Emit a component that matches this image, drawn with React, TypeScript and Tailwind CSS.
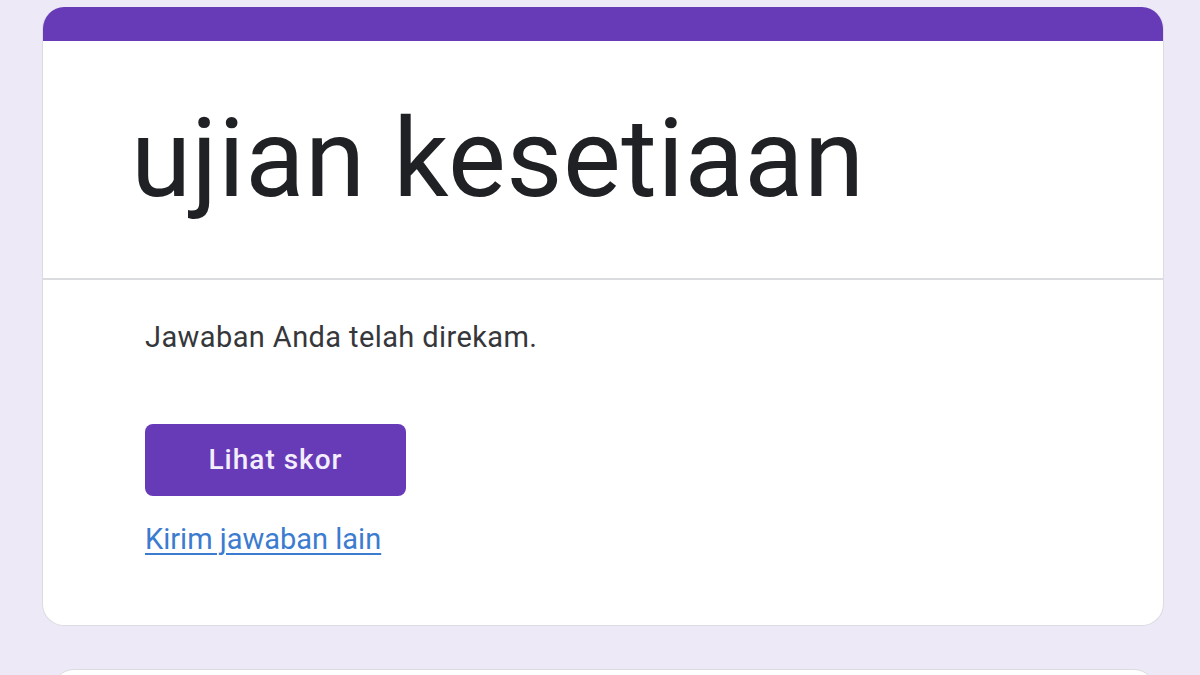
import React from "react";

export default function App() {
  return (
    <div
      className="w-[1200px] h-[675px] overflow-hidden bg-[#ede9f7] pt-[7px]"
      style={{ fontFamily: "Roboto, 'Liberation Sans', sans-serif" }}
    >
      <div className="ml-[42px] w-[1122px] rounded-[22px] overflow-hidden bg-white border border-[#dadce0] border-t-0">
        <div className="h-[34px] bg-[#673ab7]" />
        <div className="h-[239px] border-b-2 border-[#dadce0] pl-[88px] pt-[64px]">
          <h1 className="text-[109px] leading-none text-[#202124] font-normal tracking-[0.5px]">
            ujian kesetiaan
          </h1>
        </div>
        <div className="pl-[102px] pt-[40px] pb-[63px]">
          <p className="text-[29px] leading-[34px] text-[#35373b] tracking-[0.4px]">
            Jawaban Anda telah direkam.
          </p>
          <button className="mt-[70px] w-[261px] h-[72px] rounded-[8px] bg-[#673ab7] text-[#f3eefc] text-[28px] font-medium tracking-[1px]">
            Lihat skor
          </button>
          <div className="mt-[25px] leading-[36px]">
            <a
              href="#"
              className="text-[29px] leading-[36px] text-[#3b7bd0] underline underline-offset-[4px] decoration-[2px]"
            >
              Kirim jawaban lain
            </a>
          </div>
        </div>
      </div>
      <div className="ml-[52px] mt-[43px] w-[1104px] h-[60px] rounded-[22px] bg-white border border-[#dadce0]" />
    </div>
  );
}
